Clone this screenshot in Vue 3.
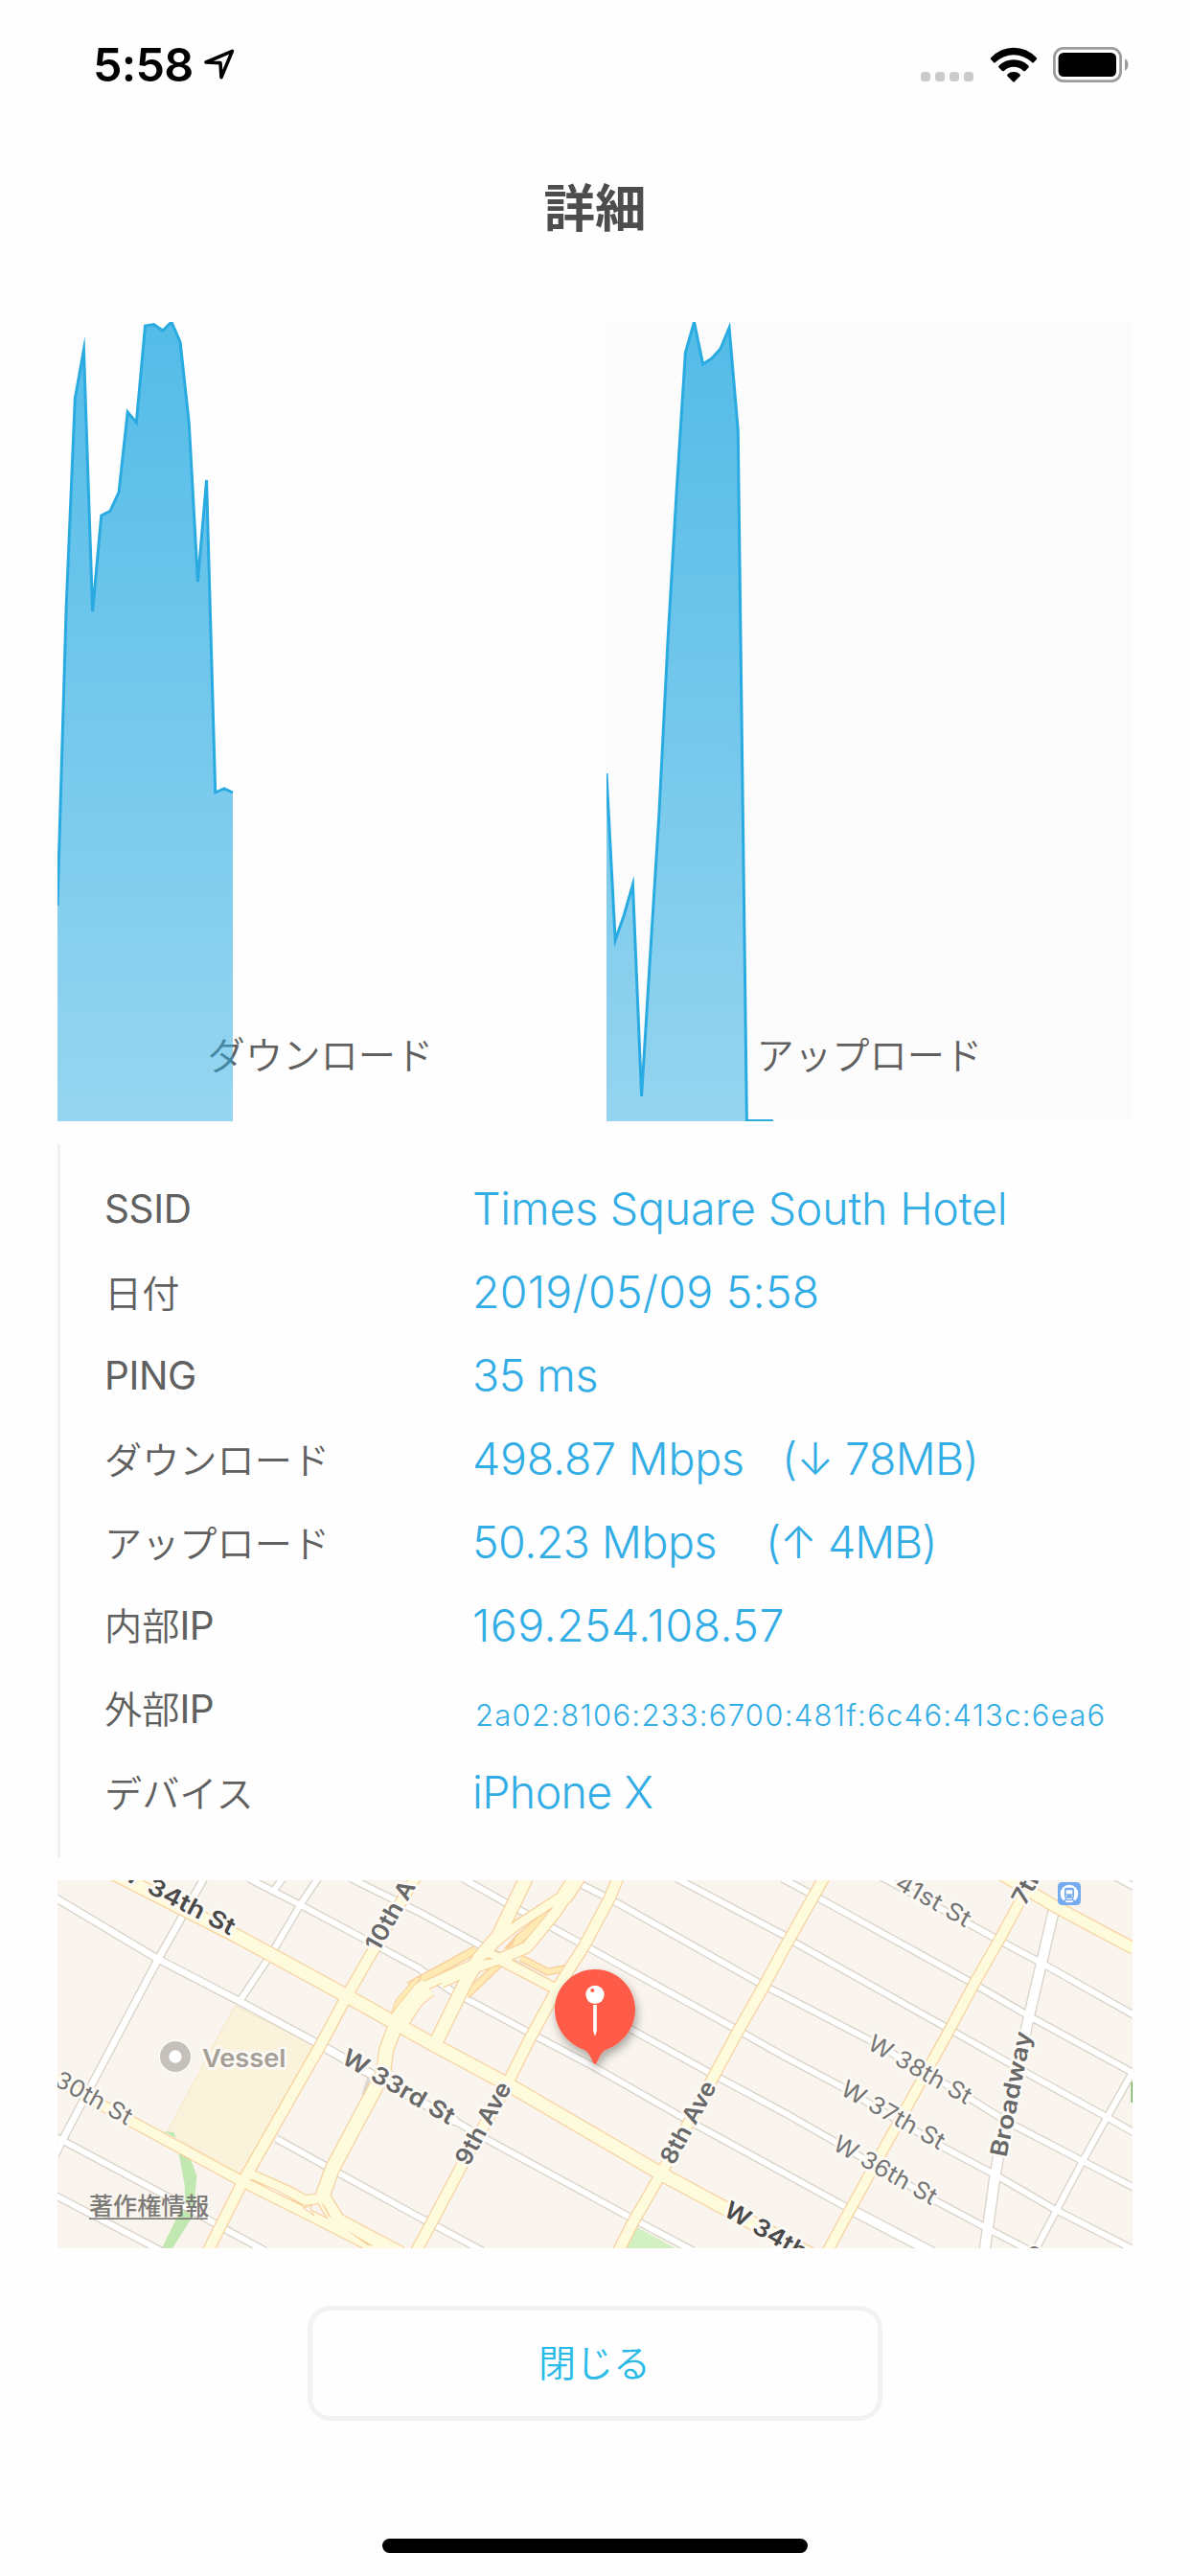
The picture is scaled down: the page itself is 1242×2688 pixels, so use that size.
<script setup>
const STEP = 9.15
const TOP = 336
const BOTTOM = 1170

const downY = [945, 633, 416, 365, 638, 538, 533.4, 513.6, 430, 441, 340, 338.6, 345, 336, 357, 441, 607, 501, 827, 823, 827]
const upY = [807, 981, 955, 923, 1144, 995, 849, 668, 512, 368, 336, 380, 374, 364, 342, 449, 1169.5, 1169.5, 1169.5, 1169.5]

function makeChart(id, label, ys, tinted) {
  const pts = ys.map((y, i) => `${(i * STEP).toFixed(2)},${(y - TOP).toFixed(1)}`)
  const last = ((ys.length - 1) * STEP).toFixed(2)
  const h = BOTTOM - TOP
  return { id, label, tinted, line: pts.join(' '), area: `0,${h} ${pts.join(' ')} ${last},${h}` }
}

const charts = [
  makeChart('down', 'ダウンロード', downY, false),
  makeChart('up', 'アップロード', upY, true),
]

const rows = [
  { label: '', latin: 'SSID', value: 'Times Square South Hotel', cls: 'v-ssid' },
  { label: '日付', latin: '', value: '2019/05/09 5:58', cls: 'v-date' },
  { label: '', latin: 'PING', value: '35 ms', cls: 'v-ping' },
  { label: 'ダウンロード', latin: '', value: '498.87 Mbps', extra: '(↓ 78MB)', cls: 'v-down' },
  { label: 'アップロード', latin: '', value: '50.23 Mbps', extra: '(↑ 4MB)', cls: 'v-up' },
  { label: '内部', latin: 'IP', value: '169.254.108.57', cls: 'v-ip' },
  { label: '外部', latin: 'IP', value: '2a02:8106:233:6700:481f:6c46:413c:6ea6', cls: 'v-ip6' },
  { label: 'デバイス', latin: '', value: 'iPhone X', cls: 'v-dev' },
]

// Map geometry, in thirds of a pixel.
const streets = [
  { w: 20, p: '-5,56 315,247 570,379 820,514' },
  { w: 24, p: '820,514 970,600 1250,757' },
  { w: 18, p: '1250,757 1340,809 1800,1059 1990,1160' },
  { w: 18, p: '600,-5 675,34 760,77 970,189 1130,275 1230,344 1480,479 1680,584 1960,744 2280,919 2480,1029' },
  { w: 28, p: '2480,1029 2740,1165' },
  { w: 18, p: '920,-5 1140,104 1315,199 1800,469 2045,604 2280,730 2420,810 2750,1004 2900,1084 3040,1157' },
  { w: 18, p: '1270,-5 1410,74 1550,149 1650,204 2130,469 2280,554 2450,644 2770,834 2940,924 3120,1029 3370,1157' },
  { w: 18, p: '1610,-2 1740,64 2210,329 2280,364 2540,499 2850,679 2970,754 3210,879 3370,962' },
  { w: 18, p: '1940,-5 2280,175 2300,190 2790,465 3000,584 3290,744 3370,790' },
  { w: 18, p: '2270,-5 2380,54 2860,319 3040,424 3360,599' },
  { w: 18, p: '2580,-10 2850,134 2950,189 3090,264 3370,422' },
  { w: 18, p: '3310,-12 3370,20' },
  { w: 18, p: '685,809 830,889 1140,1059 1170,1074 1330,1160' },
  { w: 18, p: '-5,804 15,814 370,1004 500,1079 650,1160' },
  { w: 18, p: '-5,988 330,1163' },
  { w: 20, p: '458,-5 315,247 15,814 -8,862' },
  { w: 18, p: '815,-5 760,77 670,230 570,379' },
  { w: 18, p: '705,-5 675,34' },
  { w: 18, p: '3370,594 3285,744 3210,879 3130,1029 3062,1157' },
  { w: 30, p: '3122,84 3080,264 3040,434 2945,870 2935,930 2903,1160' },
]

const connectors = [
  { w: 20, p: '1100,332 1160,299 1310,217' },
  { w: 16, p: '1450,243 1535,287 1590,276' },
  { w: 22, p: '1400,160 1560,66' },
  { w: 24, p: '1530,110 1450,180 1415,220' },
  { w: 18, p: '1280,360 1390,255' },
]

const roads = [
  { w: 40, p: '130,-45 570,179 900,359 1060,449 1185,519 1410,639 1890,919 2300,1140 2370,1178' },
  { w: 30, p: '-10,622 140,704 230,754 580,944 800,1054 1020,1166' },
  { w: 32, p: '1150,-60 980,234 905,364 825,514 580,944 470,1163' },
  { w: 32, p: '1755,-8 1730,54 1650,204 1570,330 1480,494 1410,634 1260,904 1170,1074 1122,1163' },
  { w: 32, p: '2400,-8 2280,205 2210,334 2130,474 2060,604 1890,919 1800,1074 1755,1163' },
  { w: 30, p: '3060,-20 2950,184 2870,324 2790,474 2480,1034 2410,1163' },
  { w: 34, p: '2940,-28 3120,80 3370,214' },
  { w: 48, p: '1628,-10 1585,55' },
  { w: 26, p: '1585,45 1440,140 1360,204 1320,254 1140,335' },
  { w: 32, p: '1600,40 1560,100 1470,210 1400,240 1300,275 1200,320' },
  { w: 60, p: '1160,335 1120,365 1060,455' },
  { w: 42, p: '1060,450 1030,530 1020,604 860,904 828,994' },
  { w: 40, p: '1468,-8 1380,174 1320,244 1280,314 1185,508' },
  { w: 30, p: '1350,230 1556,338' },
  { w: 28, p: '600,918 725,974 775,1002 835,994' },
  { w: 44, p: '830,990 875,1064 960,1110 1075,1170' },
]

const labels = [
  { t: '34th St', x: 276, y: 36, r: 27.5, len: 298, c: 'strong' },
  { t: 'W', x: 184, y: -14, r: 27.5, len: 68, c: 'strong' },
  { t: '10th A', x: 1005, y: 227, r: -60.5, len: 240, c: 'mid' },
  { t: 'W 33rd St', x: 885, y: 570, r: 30, len: 394, c: 'mid' },
  { t: '30th St', x: -14, y: 640, r: 29, len: 264, c: 'thin' },
  { t: '9th Ave', x: 1287, y: 898, r: -61.5, len: 284, c: 'mid' },
  { t: '8th Ave', x: 1929, y: 895, r: -61.5, len: 284, c: 'mid' },
  { t: 'W 34th St', x: 2081, y: 1047, r: 30, len: 390, c: 'strong' },
  { t: '41st St', x: 2618, y: 22, r: 29.5, len: 258, c: 'thin' },
  { t: '7th', x: 3030, y: 82, r: -61.5, len: 122, c: 'mid' },
  { t: 'W 38th St', x: 2532, y: 526, r: 29.5, len: 360, c: 'thin' },
  { t: 'W 37th St', x: 2447, y: 668, r: 29.5, len: 360, c: 'thin' },
  { t: 'W 36th St', x: 2423, y: 841, r: 29.5, len: 360, c: 'thin' },
  { t: 'Broadway', x: 2971, y: 869, r: -78.5, len: 398, c: 'mid' },
  { t: 'e', x: 3070, y: 1192, r: -61, len: 40, c: 'thin' },
]
</script>

<template>
  <main class="screen">
    <header class="status">
      <div class="clock">
        <span class="time">5:58</span>
        <svg class="loc" width="34" height="34" viewBox="0 0 34 34">
          <path d="M3 14 L30.400 2.400 L19 29.600 L18 14.600 Z" fill="none" stroke="#000" stroke-width="3.600" stroke-linejoin="round" />
        </svg>
      </div>
      <div class="indicators">
        <div class="dots"><i v-for="n in 4" :key="n"></i></div>
        <svg class="wifi" width="50" height="37" viewBox="0 0 50 37">
          <path d="M1.200 11.200 Q0.300 12 1.200 13 L4 16 Q5 17 6 16 Q14.500 8.200 25 8.200 Q35.500 8.200 44 16 Q45 17 46 16 L48.800 13 Q49.700 12 48.800 11.200 Q38.500 0.800 25 0.800 Q11.500 0.800 1.200 11.200 Z" />
          <path d="M9.500 19.500 Q8.700 20.500 9.500 21.500 L13 25 Q14 25.700 15 25 Q19.500 20.800 25 20.800 Q30.500 20.800 35 25 Q36 25.700 37 25 L40.500 21.500 Q41.300 20.500 40.500 19.500 Q34 13.300 25 13.300 Q16 13.300 9.500 19.500 Z" />
          <path d="M18.500 28.400 Q17.700 29.500 18.500 30.400 L24.200 36.300 Q25 37 25.800 36.300 L31.500 30.400 Q32.300 29.500 31.500 28.400 Q29 26 25 26 Q21 26 18.500 28.400 Z" />
        </svg>
        <svg class="battery" width="79" height="37" viewBox="0 0 79 37">
          <rect x="1.400" y="1.400" width="69.200" height="34.200" rx="9.500" fill="none" stroke="#9c9c9c" stroke-width="2.800" />
          <rect x="5.600" y="6" width="60.400" height="25" rx="5.500" fill="#000" />
          <path d="M75 12.200 C79.600 14 79.600 23 75 24.800 Z" fill="#9c9c9c" />
        </svg>
      </div>
    </header>

    <h1 class="title">詳細</h1>

    <section class="charts">
      <div v-for="c in charts" :key="c.id" class="chart" :class="{ tinted: c.tinted }">
        <span class="chart-label">{{ c.label }}</span>
        <svg class="plot" width="549" height="834" viewBox="0 0 549 834">
          <defs>
            <linearGradient :id="'fill-' + c.id" gradientUnits="userSpaceOnUse" x1="0" y1="0" x2="0" y2="834">
              <stop offset="0" stop-color="#29abe2" stop-opacity="0.8" />
              <stop offset="1" stop-color="#29abe2" stop-opacity="0.49" />
            </linearGradient>
          </defs>
          <polygon :points="c.area" :fill="`url(#fill-${c.id})`" />
          <polyline :points="c.line" fill="none" stroke="#29abe2" stroke-width="3" stroke-miterlimit="10" />
        </svg>
      </div>
    </section>

    <dl class="details">
      <div v-for="(r, i) in rows" :key="i" class="row">
        <dt><span v-if="r.label">{{ r.label }}</span><span v-if="r.latin" class="latin">{{ r.latin }}</span></dt>
        <dd :class="r.cls"><span>{{ r.value }}</span><span v-if="r.extra" class="extra">{{ r.extra }}</span></dd>
      </div>
    </dl>

    <section class="map">
      <svg width="1122" height="384" viewBox="0 0 3366 1152">
        <defs>
          <filter id="pin-shadow" x="-40%" y="-40%" width="180%" height="180%">
            <feDropShadow dx="6" dy="16" stdDeviation="14" flood-color="#000" flood-opacity="0.32" />
          </filter>
        </defs>
        <rect width="3366" height="1152" fill="#f9f4ed" />
        <polygon points="555,394 815,520 580,940 345,785" fill="#faf2db" stroke="#f6e8c2" stroke-width="3" />
        <path d="M380 855 L415 870 L436 924 L425 1050 L358 1155 L325 1155 L372 1060 L400 1010 L398 954 Z M330 786 L365 790 L370 806 Z" fill="#c1e8b0" />
        <path d="M1815 1086 L1940 1155 L1780 1155 Z" fill="#d3f0c2" />
        <path d="M968 620 L985 600 L975 668 L952 672 Z" fill="#ddd9d2" />

        <g fill="none" stroke-linejoin="round">
          <polyline v-for="(s, i) in streets" :key="'sc' + i" :points="s.p" stroke="#d9d3c8" :stroke-width="s.w + 8" />
          <polyline v-for="(s, i) in streets" :key="'sf' + i" :points="s.p" stroke="#fff" :stroke-width="s.w" />
          <polyline v-for="(s, i) in connectors" :key="'cc' + i" :points="s.p" stroke="#f8cfa0" :stroke-width="s.w + 8" />
          <polyline v-for="(s, i) in connectors" :key="'cf' + i" :points="s.p" stroke="#feeab2" :stroke-width="s.w" />
          <polyline v-for="(s, i) in roads" :key="'rc' + i" :points="s.p" stroke="#f8cf9a" :stroke-width="s.w + 7" />
          <polyline v-for="(s, i) in roads" :key="'rf' + i" :points="s.p" stroke="#fdfbdc" :stroke-width="s.w" />
        </g>
        <path d="M1045 418 L1060 374 L1120 306 L1140 302 Z" fill="#feeab2" stroke="#f8cf9a" stroke-width="3" />
        <path d="M826 1008 L836 1018 L858 1058 L848 1050 Z M900 1092 L990 1145 L970 1142 Z M1330 252 L1350 240 L1365 246 Z M1395 218 L1440 166 L1425 205 Z" fill="#f8cf9a" />
        <path d="M609 937 L690 972 L768 1018 L690 982 Z M797 1018 L792 1030 L803 1050 L770 1026 Z" fill="#f9f4ed" stroke="#f8cf9a" stroke-width="3" />
        <rect x="3362" y="632" width="4" height="64" fill="#5cae45" />

        <circle cx="369" cy="552" r="52" fill="#fff" opacity="0.7" />
        <circle cx="369" cy="552" r="34" fill="#fff" stroke="#c5c1ba" stroke-width="28" />
        <text class="lbl poi" x="453" y="584" textLength="262" lengthAdjust="spacingAndGlyphs">Vessel</text>

        <text
          v-for="(l, i) in labels" :key="'l' + i" class="lbl" :class="l.c"
          :transform="`translate(${l.x} ${l.y}) rotate(${l.r})`"
          :textLength="l.len" lengthAdjust="spacingAndGlyphs"
        >{{ l.t }}</text>

        <text class="legal" x="99" y="1048" textLength="376">著作権情報</text>
        <rect x="99" y="1057" width="371" height="5" fill="#7c7a77" />

        <g transform="translate(3132 6)">
          <rect width="72" height="72" rx="13" fill="#76abf0" />
          <circle cx="36" cy="36" r="28" fill="#fff" />
          <path d="M27 17 H45 Q51 17 51 23 V45 Q51 50 46 50 H26 Q21 50 21 45 V23 Q21 17 27 17 Z" fill="#76abf0" />
          <rect x="26" y="25" width="20" height="12" fill="#fff" />
          <circle cx="27" cy="43" r="2.500" fill="#fff" />
          <circle cx="45" cy="43" r="2.500" fill="#fff" />
          <path d="M27 50 L20 61 M45 50 L52 61 M23 56 H49" stroke="#76abf0" stroke-width="4" fill="none" />
        </g>

        <g filter="url(#pin-shadow)">
          <path d="M1683 279 C1752 279 1809 335 1809 404 C1809 461 1771 511 1718 530 C1701 538 1696 557 1688 572 Q1683 579 1678 572 C1670 557 1665 538 1648 530 C1595 511 1557 461 1557 404 C1557 335 1614 279 1683 279 Z" fill="#fe5c48" />
        </g>
        <circle cx="1683" cy="358" r="29" fill="#fff" />
        <circle cx="1675" cy="345" r="6" fill="#fe5c48" />
        <path d="M1677.500 390 H1688.500 V472 L1684 486 H1682 L1677.500 472 Z" fill="#fff" />
      </svg>
    </section>

    <button class="close" type="button">閉じる</button>
    <div class="home"></div>
  </main>
</template>

<style>
body {
  margin: 0;
  background: #fefefe;
}
</style>

<style scoped>
.screen {
  width: 1242px;
  height: 2688px;
  box-sizing: border-box;
  overflow: hidden;
  background: #fefefe;
  font-family: Inter, "Noto Sans CJK JP", sans-serif;
  display: flex;
  flex-direction: column;
  align-items: center;
}
.status {
  width: 100%;
  height: 132px;
  box-sizing: border-box;
  padding: 49px 64px 0 97px;
  display: flex;
  justify-content: space-between;
  align-items: flex-start;
}
.clock {
  display: flex;
  align-items: flex-start;
}
.time {
  width: 115px;
  font-size: 48.500px;
  line-height: 38px;
  font-weight: 600;
  letter-spacing: -0.7px;
}
.loc {
  margin-top: 2px;
}
.indicators {
  display: flex;
  align-items: flex-start;
}
.dots {
  display: flex;
  gap: 5px;
  margin: 26px 17px 0 0;
}
.dots i {
  width: 10px;
  height: 10px;
  border-radius: 3.500px;
  background: #cbcbcb;
}
.wifi {
  margin-right: 16px;
}
.title {
  margin: 0;
  height: 204px;
  font: 700 53.500px/164px "Noto Sans CJK JP", sans-serif;
  color: #4d4d4d;
}
.charts {
  width: 1122px;
  display: flex;
  justify-content: space-between;
}
.chart {
  position: relative;
  width: 549px;
  height: 834px;
  box-sizing: border-box;
  padding-top: 735px;
  text-align: center;
}
.tinted {
  background: #fcfcfc;
}
.chart-label {
  font: 350 39.300px/56px "Noto Sans CJK JP", sans-serif;
  color: #606060;
}
.plot {
  position: absolute;
  left: 0;
  top: 0;
}
.details {
  width: 1122px;
  height: 744px;
  margin: 24px 0;
  box-sizing: border-box;
  padding: 24px 0;
  border-left: 3px solid #f0f0f0;
}
.row {
  height: 87px;
  display: flex;
  align-items: center;
}
dt {
  width: 384px;
  padding: 0 0 3px 46px;
  font-family: "Noto Sans CJK JP", sans-serif;
  font-size: 39.200px;
  font-weight: 350;
  line-height: 84px;
  color: #606060;
}
.latin {
  font-family: Inter, sans-serif;
  font-size: 40.500px;
  font-weight: 400;
  letter-spacing: -0.4px;
}
dd {
  margin: 0;
  font-size: 46.500px;
  line-height: 87px;
  font-weight: 300;
  letter-spacing: -0.2px;
  color: #33ade5;
  white-space: nowrap;
}
.extra {
  margin-left: 39px;
  letter-spacing: -0.6px;
}
.v-date {
  letter-spacing: 0.25px;
}
.v-ping,
.v-up {
  letter-spacing: -0.5px;
}
.v-dev {
  letter-spacing: -0.6px;
}
.v-up .extra {
  margin-left: 51px;
  letter-spacing: -1px;
}
.v-ip {
  letter-spacing: 0.45px;
}
dd.v-ip6 {
  font-size: 31px;
  letter-spacing: 1.270px;
  padding: 11px 0 0 3px;
}
.map {
  width: 1122px;
  height: 384px;
  overflow: hidden;
}
.map svg {
  display: block;
}
.lbl {
  font-family: Inter, sans-serif;
  font-size: 74px;
  paint-order: stroke;
  stroke: #fdfaf5;
  stroke-width: 16px;
  stroke-linejoin: round;
}
.strong {
  font-weight: 600;
  fill: #4a4a4a;
}
.mid {
  font-weight: 600;
  fill: #686868;
}
.thin {
  font-weight: 400;
  fill: #757575;
}
.poi {
  font-size: 79px;
  font-weight: 600;
  fill: #a59f98;
}
.legal {
  font-family: "Noto Sans CJK JP", sans-serif;
  font-size: 75px;
  font-weight: 500;
  fill: #7c7a77;
}
.close {
  width: 600px;
  height: 120px;
  margin: 60px 0 123px;
  padding: 0 1px 6px 0;
  box-sizing: border-box;
  border: 5px solid #f2f2f2;
  border-radius: 24px;
  background: #fefefe;
  font: 350 39px/56px "Noto Sans CJK JP", sans-serif;
  color: #29bbe8;
}
.home {
  width: 444px;
  height: 15px;
  border-radius: 8px;
  background: #000;
}
</style>
